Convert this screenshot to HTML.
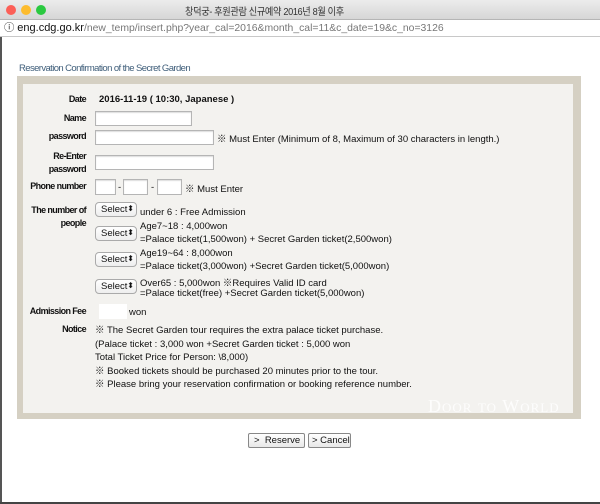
<!DOCTYPE html>
<html><head><meta charset="utf-8"><style>
*{margin:0;padding:0;box-sizing:border-box}
body{width:600px;height:504px;position:relative;background:#fff;font-family:"Liberation Sans","Noto Sans CJK KR",sans-serif;overflow:hidden;color:#111}
.a{position:absolute;white-space:nowrap}
.t{font-size:9.5px}
.l{font-size:9px;font-weight:bold;letter-spacing:-0.6px;text-align:right;width:80px;left:6px}
.in{position:absolute;background:#fff;border:1px solid #b5b5b5;box-shadow:inset 0 1px 1px #ddd}
.sel{position:absolute;width:42px;height:15px;border:1px solid #aaa;border-radius:4px;background:linear-gradient(#fff,#eee);font-size:9.5px;padding:1px 0 0 5px}
.sel:after{content:"\2B0D";position:absolute;right:2px;top:1px;font-size:8px}
.btn{position:absolute;height:15px;border:1px solid #888;border-radius:2px;background:linear-gradient(#fff,#e8e8e8);font-size:9.5px;padding:1px 0 0 5px}
</style></head><body>
<div class="a" style="left:0;top:0;width:600px;height:20px;background:linear-gradient(#ececec,#d6d6d6);border-bottom:1px solid #b5b5b5"></div>
<div class="a" style="left:6px;top:5px;width:10px;height:10px;border-radius:50%;background:#fc5f57"></div>
<div class="a" style="left:21px;top:5px;width:10px;height:10px;border-radius:50%;background:#fdbc2e"></div>
<div class="a" style="left:36px;top:5px;width:10px;height:10px;border-radius:50%;background:#2ac940"></div>
<div class="a" style="left:185px;top:3px;font-size:10px;color:#333;letter-spacing:-0.4px;transform:scaleX(0.92);transform-origin:left">창덕궁- 후원관람 신규예약 2016년 8월 이후</div>
<div class="a" style="left:0;top:20px;width:600px;height:17px;background:#fff;border-bottom:1px solid #c8c8c8"></div>
<div class="a" style="left:4px;top:21px;font-size:10.4px;color:#222;line-height:14px">ⓘ <span style="color:#111;font-size:11px">eng.cdg.go.kr</span><span style="color:#777">/new_temp/insert.php?year_cal=2016&amp;month_cal=11&amp;c_date=19&amp;c_no=3126</span></div>
<div class="a" style="left:0;top:37px;width:2px;height:467px;background:#555"></div>
<div class="a" style="left:0;top:502px;width:600px;height:2px;background:#444"></div>
<div class="a" style="left:19px;top:63px;font-size:9.5px;color:#3f5e7a;letter-spacing:-0.6px">Reservation Confirmation of the Secret Garden</div>
<div class="a" style="left:17px;top:76px;width:564px;height:343px;background:#d5d0c3"></div>
<div class="a" style="left:23px;top:84px;width:550px;height:329px;background:#f3f2ef"></div>
<div class="a" style="left:428px;top:396px;font-family:'Liberation Serif',serif;font-size:18px;font-variant:small-caps;color:#fff;opacity:.85;letter-spacing:1px">Door to World</div>

<div class="a l" style="top:94px">Date</div>
<div class="a t" style="left:99px;top:94px;font-weight:bold;font-size:9.5px">2016-11-19 ( 10:30, Japanese )</div>
<div class="a l" style="top:113px">Name</div>
<div class="in" style="left:95px;top:111px;width:97px;height:15px"></div>
<div class="a l" style="top:131px">password</div>
<div class="in" style="left:95px;top:130px;width:119px;height:15px"></div>
<div class="a t" style="left:217px;top:131px">※ Must Enter (Minimum of 8, Maximum of 30 characters in length.)</div>
<div class="a l" style="top:150px;line-height:13px">Re-Enter<br>password</div>
<div class="in" style="left:95px;top:155px;width:119px;height:15px"></div>
<div class="a l" style="top:181px">Phone number</div>
<div class="in" style="left:95px;top:179px;width:21px;height:16px"></div>
<div class="a t" style="left:118px;top:182px">-</div>
<div class="in" style="left:123px;top:179px;width:25px;height:16px"></div>
<div class="a t" style="left:151px;top:182px">-</div>
<div class="in" style="left:157px;top:179px;width:25px;height:16px"></div>
<div class="a t" style="left:185px;top:181px">※ Must Enter</div>
<div class="a l" style="top:204px;line-height:13px">The number of<br>people</div>
<div class="sel" style="left:95px;top:202px">Select</div>
<div class="a t" style="left:140px;top:207px">under 6 : Free Admission</div>
<div class="sel" style="left:95px;top:226px">Select</div>
<div class="a t" style="left:140px;top:221px">Age7~18 : 4,000won</div>
<div class="a t" style="left:140px;top:234px">=Palace ticket(1,500won) + Secret Garden ticket(2,500won)</div>
<div class="sel" style="left:95px;top:252px">Select</div>
<div class="a t" style="left:140px;top:248px">Age19~64 : 8,000won</div>
<div class="a t" style="left:140px;top:261px">=Palace ticket(3,000won) +Secret Garden ticket(5,000won)</div>
<div class="sel" style="left:95px;top:279px">Select</div>
<div class="a t" style="left:140px;top:275px">Over65 : 5,000won ※Requires Valid ID card</div>
<div class="a t" style="left:140px;top:288px">=Palace ticket(free) +Secret Garden ticket(5,000won)</div>
<div class="a l" style="top:306px">Admission Fee</div>
<div class="a" style="left:99px;top:304px;width:28px;height:15px;background:#fff"></div>
<div class="a t" style="left:129px;top:307px">won</div>
<div class="a l" style="top:324px">Notice</div>
<div class="a t" style="left:95px;top:324px;line-height:13.5px">※ The Secret Garden tour requires the extra palace ticket purchase.<br>(Palace ticket : 3,000 won +Secret Garden ticket : 5,000 won<br>Total Ticket Price for Person: \8,000)<br>※ Booked tickets should be purchased 20 minutes prior to the tour.<br>※ Please bring your reservation confirmation or booking reference number.</div>
<div class="btn" style="left:248px;top:433px;width:57px">&gt;&nbsp; Reserve</div>
<div class="btn" style="left:308px;top:433px;width:43px;padding-left:3px">&gt; Cancel</div>
</body></html>
